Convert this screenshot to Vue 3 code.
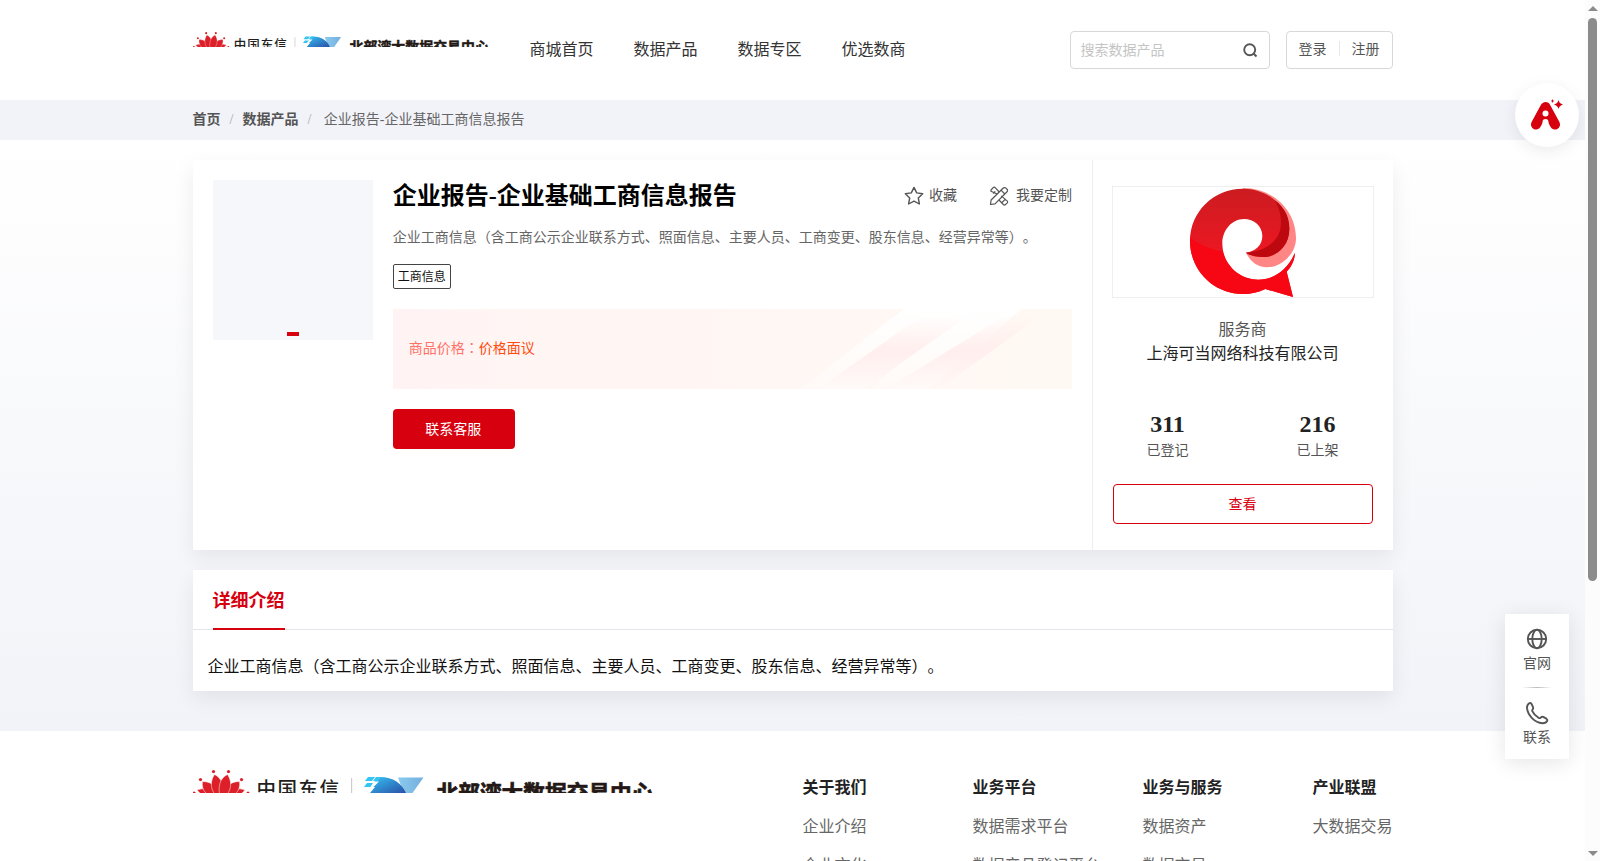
<template>
  <div class="page">
    <!-- 品牌标识，页头和页脚共用 -->
    <svg class="symbols" width="0" height="0">
      <defs>
        <linearGradient id="waveDeep" x1="0" y1="0" x2="1" y2="1">
          <stop offset="0" stop-color="#35c4f3" />
          <stop offset="1" stop-color="#2a4fa8" />
        </linearGradient>
        <linearGradient id="waveLight" x1="0" y1="0" x2="1" y2="0">
          <stop offset="0" stop-color="#8acbee" />
          <stop offset="1" stop-color="#74aede" />
        </linearGradient>
        <symbol id="brand" viewBox="0 0 462 23">
          <g fill="#d9202b">
            <circle cx="20.500" cy="1.600" r="1.600" />
            <circle cx="35.500" cy="1.600" r="1.600" />
            <circle cx="7.500" cy="9.600" r="1.600" />
            <circle cx="48.500" cy="9.600" r="1.600" />
            <circle cx="1.200" cy="23" r="1.500" />
            <circle cx="55" cy="23" r="1.500" />
          </g>
          <g fill="#dc1f29" stroke="#fff" stroke-width="0.500">
            <path d="M28 32C22 18 15 17 4 20c5 6 12 11 24 12z" />
            <path d="M28 32c6-14 13-15 24-12-5 6-12 11-24 12z" />
            <path d="M28 31C14 28 8 20 9.500 11.500c10 0 18 7 18.500 19.500z" />
            <path d="M28 31c14-3 20-11 18.500-19.500-10 0-18 7-18.500 19.500z" />
            <path d="M28 30C16 22 17 11 21.500 4.500c7 3 11 12 6.500 25.500z" />
            <path d="M28 30c12-8 11-19 6.500-25.500-7 3-11 12-6.500 25.500z" />
          </g>
          <text x="63.500" y="26" font-size="19.500" font-weight="500" letter-spacing="1.500" fill="#231f20">中国东信</text>
          <rect x="158" y="8" width="1.200" height="15" fill="#ccc" />
          <path d="M205 7.500h25.500l-11 15.500h-9z" fill="url(#waveLight)" />
          <path d="M184 7c15-1 25 6 29 16h-36l5-6h-3z" fill="url(#waveDeep)" />
          <path d="M175 7h7l-3 4h-7zM183 7h5l-3 4h-5zM174 13h8l-3 4h-8z" fill="#35c4f3" />
          <path d="M181 11.500h5l-6 6h-3z" fill="#fff" />
          <text x="243.500" y="31.300" font-size="21.700" font-weight="700" fill="#231815" stroke="#231815" stroke-width="0.700">北部湾大数据交易中心</text>
        </symbol>
      </defs>
    </svg>

    <header class="header">
      <div class="container header-inner">
        <svg class="header-logo"><use href="#brand" /></svg>
        <nav class="nav">
          <a v-for="item in navs" :key="item">{{ item }}</a>
        </nav>
        <div class="search">
          <span>搜索数据产品</span>
          <svg width="16" height="16" viewBox="0 0 16 16" fill="none" stroke="#555" stroke-width="1.900">
            <circle cx="7.700" cy="7.700" r="5.500" />
            <path d="M11.500 11.500l3 3" />
          </svg>
        </div>
        <div class="account">
          <a>登录</a>
          <i></i>
          <a>注册</a>
        </div>
      </div>
    </header>

    <div class="breadcrumb">
      <div class="container">
        <b>首页</b><span class="slash">/</span><b>数据产品</b><span class="slash">/</span><span class="current">企业报告-企业基础工商信息报告</span>
      </div>
    </div>

    <main class="main">
      <section class="container card product">
        <div class="cover"><span></span></div>

        <div class="info">
          <div class="title-row">
            <h1>企业报告-企业基础工商信息报告</h1>
            <div class="action favorite">
              <svg width="20" height="20" viewBox="0 0 20 20" fill="none" stroke="#555" stroke-width="1.400" stroke-linejoin="round">
                <path d="M10 1.400l2.700 5.500 6 .9-4.400 4.200 1.100 6-5.400-2.900L4.600 18l1.100-6L1.300 7.800l6-.9z" />
              </svg>
              <span>收藏</span>
            </div>
            <div class="action custom">
              <svg width="20" height="20" viewBox="0 0 20 20" fill="none" stroke="#555" stroke-width="1.200" stroke-linejoin="round">
                <path d="M1.500 18.500l.6-4.500L14 2.200c.9-.9 2.200-.8 3 0l.8.8c.9.900.9 2.100 0 3L6 17.800z" />
                <path d="M12 4.200L15.800 8M8.200 8L2 5.200a2 2 0 0 1 0-1.200l2-2.200c.8-.7 1.700-.7 2.400 0L10.200 6M4 7.500l2.200-2.200M12.200 9.900l5.900 5c.7.700.7 1.500 0 2.200L16.500 18.500c-.7.700-1.500.7-2.200 0L10 14M13 16.500l3.600-3.600" />
              </svg>
              <span>我要定制</span>
            </div>
          </div>
          <p class="desc">{{ intro }}</p>
          <span class="tag">工商信息</span>
          <div class="price">
            <svg class="price-bg" width="290" height="80" viewBox="0 0 290 80">
              <defs>
                <linearGradient id="streakWhite" x1="0" y1="0" x2="0" y2="1">
                  <stop offset="0" stop-color="#fff" />
                  <stop offset="1" stop-color="#fff" stop-opacity="0.300" />
                </linearGradient>
                <linearGradient id="streakPink" x1="0" y1="0" x2="0" y2="1">
                  <stop offset="0" stop-color="#ffeeed" stop-opacity="0" />
                  <stop offset="0.500" stop-color="#ffeeed" />
                  <stop offset="1" stop-color="#ffeeed" stop-opacity="0" />
                </linearGradient>
              </defs>
              <path d="M122 0h65L82 80H18z" fill="url(#streakWhite)" />
              <path d="M181 0h59L146 80H88z" fill="url(#streakWhite)" />
              <path d="M141 6h46L82 80H36z" fill="url(#streakPink)" />
              <path d="M226 5h36L156 80H104z" fill="url(#streakPink)" />
            </svg>
            <span class="price-label">商品价格<span class="colon">：</span></span><span class="price-value">价格面议</span>
          </div>
          <button class="btn-primary">联系客服</button>
        </div>

        <aside class="vendor">
          <div class="vendor-logo">
            <svg width="260" height="110" viewBox="99 81 780 330">
              <defs>
                <linearGradient id="vendorRed" x1="0" y1="0" x2="0" y2="1">
                  <stop offset="0" stop-color="#cb1c20" />
                  <stop offset="0.600" stop-color="#ed1722" />
                  <stop offset="1" stop-color="#fc0814" />
                </linearGradient>
              </defs>
              <path d="M489 84C580 84 649 153 648 236C647 284 602 322 562 322C530 322 510 302 498 278C545 276 603 249 603 190C603 150 560 110 489 90Z" fill="#ff8685" />
              <path d="M489 86C560 86 628 137 628 207C628 258 590 291 550 291C528 291 510 287 498 278C527 274 547 256 547 228C547 199 522 177 492 177C456 177 427 210 427 250C427 311 475 359 535 359C580 359 622 332 645 278C644 300 635 320 620 335L639 411L556 387C535 397 513 402 489 402C401 402 330 331 330 243C330 155 401 86 489 86Z" fill="url(#vendorRed)" />
              <path d="M330 232C358 255 392 269 428 274C441 323 483 359 535 359C580 359 622 332 645 278C644 300 635 320 620 335L639 411L556 387C535 397 513 402 489 402C401 402 330 331 330 243Z" fill="#f70713" />
              <path d="M583 121C619 145 628 177 628 207C628 258 590 291 550 291C528 291 510 287 498 278C545 276 603 249 603 190C603 164 597 141 583 121Z" fill="#bd080f" />
            </svg>
          </div>
          <div class="vendor-role">服务商</div>
          <div class="vendor-name">上海可当网络科技有限公司</div>
          <div class="stats">
            <div v-for="stat in stats" :key="stat.label" class="stat">
              <strong>{{ stat.value }}</strong>
              <span>{{ stat.label }}</span>
            </div>
          </div>
          <button class="btn-outline">查看</button>
        </aside>
      </section>

      <section class="container card detail">
        <div class="tabs"><span class="tab">详细介绍</span></div>
        <p>{{ intro }}</p>
      </section>
    </main>

    <footer class="footer">
      <div class="container footer-inner">
        <svg class="footer-logo"><use href="#brand" /></svg>
        <div class="footer-cols">
          <dl v-for="col in footerCols" :key="col.title">
            <dt>{{ col.title }}</dt>
            <dd v-for="link in col.links" :key="link">{{ link }}</dd>
          </dl>
        </div>
      </div>
    </footer>

    <!-- 悬浮入口 -->
    <div class="ai-entry">
      <svg width="34" height="32" viewBox="0 0 34 32">
        <path d="M6 25.500L15.500 8L25 25.500" fill="none" stroke="#d7000f" stroke-width="10" stroke-linecap="round" stroke-linejoin="round" />
        <path d="M15.500 8L22 22H9z" fill="#d7000f" />
        <circle cx="15.500" cy="14.500" r="3" fill="#fff" />
        <path d="M11 31l1.500-4v-4q0-3 3-3t3 3v4l1.500 4z" fill="#fff" />
        <path d="M28.500 1q.7 3.500 4.500 4.500-3.800 1-4.500 4.500-.7-3.500-4.500-4.500 3.800-1 4.500-4.500zM22.500 0l.6 1.400 1.400.6-1.400.6-.6 1.400-.6-1.400-1.400-.6 1.400-.6z" fill="#d7000f" />
      </svg>
    </div>

    <div class="float-bar">
      <div class="float-item">
        <svg width="24" height="24" viewBox="0 0 24 24" fill="none" stroke="#555" stroke-width="1.900">
          <circle cx="12" cy="12" r="9.200" />
          <ellipse cx="12" cy="12" rx="4.700" ry="9.200" />
          <path d="M3 12h18" />
        </svg>
        <span>官网</span>
      </div>
      <i></i>
      <div class="float-item">
        <svg width="24" height="24" viewBox="0 0 24 24" fill="none" stroke="#555" stroke-width="1.900" stroke-linejoin="round">
          <path d="M4.300 2.200Q1.700 3.800 2 7.200C2.800 14.200 9.400 21.500 17.400 22.200Q21 22.300 22.300 19.800Q22.700 18.500 21.400 17.700L18.200 15.900Q17 15.300 16 16.300L15.300 17Q14.400 17.400 13.500 16.800Q9 14 7.300 10.200Q6.900 9.200 7.600 8.500Q8.500 7.600 8.100 6.300L6.700 3.100Q5.900 1.500 4.300 2.200Z" />
        </svg>
        <span>联系</span>
      </div>
    </div>

    <div class="scrollbar">
      <span class="arrow up"></span>
      <span class="thumb"></span>
      <span class="arrow down"></span>
    </div>
  </div>
</template>

<script setup>
const navs = ['商城首页', '数据产品', '数据专区', '优选数商']

const intro = '企业工商信息（含工商公示企业联系方式、照面信息、主要人员、工商变更、股东信息、经营异常等）。'

const stats = [
  { value: 311, label: '已登记' },
  { value: 216, label: '已上架' }
]

const footerCols = [
  { title: '关于我们', links: ['企业介绍', '企业文化'] },
  { title: '业务平台', links: ['数据需求平台', '数据产品登记平台'] },
  { title: '业务与服务', links: ['数据资产', '数据交易'] },
  { title: '产业联盟', links: ['大数据交易'] }
]
</script>

<style>
body {
  margin: 0;
}
</style>

<style scoped>
.page {
  position: relative;
  width: 1600px;
  height: 861px;
  padding-right: 15px;
  box-sizing: border-box;
  overflow: hidden;
  background: #fff;
  font-family: "Liberation Serif", "Noto Sans CJK SC", serif;
  font-size: 14px;
  text-spacing-trim: space-all;
  color: #555;
}

.page * {
  box-sizing: border-box;
}

.symbols {
  position: absolute;
}

.container {
  width: 1200px;
  margin: 0 auto;
}

.header {
  height: 100px;
}

.header-inner {
  display: flex;
  align-items: flex-start;
  padding-top: 31px;
}

.header-logo {
  width: 297px;
  height: 15px;
  margin-top: 1px;
}

.nav {
  display: flex;
  gap: 40px;
  margin-left: 40px;
  font-size: 16px;
  line-height: 38px;
  color: #333;
}

.search {
  display: flex;
  justify-content: space-between;
  align-items: center;
  width: 200px;
  height: 38px;
  margin-left: auto;
  padding: 0 11px 0 10px;
  border: 1px solid #d8d8d8;
  border-radius: 4px;
  color: #c4c4c4;
}

.search span {
  padding-bottom: 2px;
}

.account {
  display: flex;
  align-items: center;
  justify-content: center;
  gap: 12px;
  width: 107px;
  height: 38px;
  margin-left: 16px;
  padding-bottom: 4px;
  border: 1px solid #d8d8d8;
  border-radius: 4px;
}

.account i {
  width: 1px;
  height: 15px;
  background: #e8e8e8;
}

.breadcrumb {
  height: 40px;
  line-height: 40px;
  background: #f2f3f8;
}

.slash {
  margin: 0 9px;
  color: #a5a8ae;
}

.current {
  margin-left: 3.5px;
  color: #666;
}

.main {
  height: 591px;
  padding-top: 20px;
  background: linear-gradient(180deg, #fff 0%, #f2f3f8 100%);
}

.card {
  background: #fff;
  box-shadow: 0 8px 20px rgba(0, 0, 0, 0.07);
}

.product {
  display: flex;
  height: 390px;
  padding-left: 0.5px;
}

.cover {
  display: flex;
  align-items: flex-end;
  justify-content: center;
  width: 160px;
  height: 160px;
  margin: 20px 20px 0;
  padding-bottom: 4px;
  background: #f5f7fb;
}

.cover span {
  width: 12px;
  height: 4px;
  background: #d7000f;
}

.info {
  width: 680px;
  padding-top: 20px;
}

.title-row {
  display: flex;
  align-items: center;
  height: 32px;
}

.title-row h1 {
  margin: 0;
  font-size: 24px;
  line-height: 32px;
  color: #000;
}

.action {
  display: flex;
  align-items: center;
  height: 30px;
}

.action span {
  padding-bottom: 4px;
}

.favorite {
  margin-left: auto;
  gap: 5px;
}

.custom {
  margin-left: 32px;
  gap: 7px;
}

.desc {
  margin: 15px 0 0;
  line-height: 22px;
  color: #666;
}

.tag {
  display: block;
  width: 58px;
  height: 25px;
  margin-top: 15px;
  padding-left: 4px;
  border: 1px solid #444;
  border-radius: 2px;
  font-size: 12px;
  line-height: 24px;
  color: #111;
}

.price {
  position: relative;
  display: flex;
  align-items: center;
  height: 80px;
  margin-top: 20px;
  padding: 0 0 4px 16px;
  background: linear-gradient(90deg, #fff4f3, #fff9f4);
}

.price-bg {
  position: absolute;
  top: 0;
  right: 0;
}

.price-label {
  color: #ff7268;
}

/* 冒号居中显示 */
.colon {
  font-family: "Noto Sans CJK TC", sans-serif;
  line-height: 1;
}

.price-value {
  color: #ff4a0c;
}

button {
  display: block;
  height: 40px;
  border-radius: 4px;
  font-family: inherit;
  font-size: 14px;
}

.btn-primary {
  width: 122px;
  margin-top: 20px;
  padding: 0 1px 2px 0;
  border: none;
  background: #d7000f;
  color: #fff;
}

.vendor {
  width: 301px;
  margin-left: 19.5px;
  padding: 26px 19px 0;
  border-left: 1px solid #eee;
  text-align: center;
}

.vendor-logo {
  width: 262px;
  height: 112px;
  border: 1px solid #eee;
}

.vendor-logo svg {
  display: block;
}

.vendor-role {
  margin-top: 20px;
  font-size: 16px;
  line-height: 24px;
}

.vendor-name {
  font-size: 16px;
  line-height: 24px;
  color: #222;
}

.stats {
  display: flex;
  margin: 44px -19px 0;
}

.stat {
  flex: 1;
}

.stat strong {
  display: block;
  font-size: 24px;
  line-height: 28px;
  color: #222;
}

.stat span {
  display: block;
  margin-top: 2px;
  line-height: 22px;
}

.btn-outline {
  width: 260px;
  margin: 22px 0 0 1px;
  padding: 0 0 2px;
  border: 1px solid #d7000f;
  background: #fff;
  color: #d7000f;
}

.detail {
  height: 121px;
  margin-top: 20px;
}

.tabs {
  height: 60px;
  padding-left: 20px;
  border-bottom: 1px solid #e4e4ea;
}

.tab {
  display: inline-block;
  height: 60px;
  border-bottom: 2px solid #d7000f;
  font-size: 18px;
  font-weight: bold;
  line-height: 62px;
  color: #d7000f;
}

.detail p {
  margin: 24px 0 0 15px;
  font-size: 16px;
  line-height: 26px;
  color: #111;
}

.footer {
  height: 130px;
  overflow: hidden;
}

.footer-inner {
  display: flex;
  justify-content: space-between;
  padding-top: 39px;
}

.footer-logo {
  width: 462px;
  height: 23px;
}

.footer-cols {
  display: grid;
  grid-template-columns: repeat(3, 170px) 80px;
  margin-top: 5px;
  font-size: 16px;
  line-height: 26px;
}

.footer-cols dl,
.footer-cols dd {
  margin: 0;
  white-space: nowrap;
}

.footer-cols dt {
  font-weight: bold;
  color: #222;
}

.footer-cols dd {
  margin-top: 13px;
  color: #666;
}

.ai-entry {
  position: absolute;
  top: 83px;
  left: 1515px;
  display: flex;
  align-items: center;
  justify-content: center;
  width: 64px;
  height: 64px;
  border-radius: 50%;
  background: #fff;
  box-shadow: 0 4px 16px rgba(0, 0, 0, 0.08);
}

.float-bar {
  position: absolute;
  top: 614px;
  left: 1505px;
  display: flex;
  flex-direction: column;
  align-items: center;
  width: 64px;
  height: 145px;
  padding-top: 13px;
  background: #fff;
  box-shadow: 0 4px 20px rgba(0, 0, 0, 0.1);
}

.float-item {
  display: flex;
  flex-direction: column;
  align-items: center;
  height: 50px;
  line-height: 26px;
}

.float-bar i {
  width: 30px;
  height: 1px;
  margin: 10px 0 13px;
  background: linear-gradient(90deg, #fff, #bbb, #fff);
}

.scrollbar {
  position: absolute;
  top: 0;
  right: 0;
  display: flex;
  flex-direction: column;
  align-items: center;
  width: 15px;
  height: 861px;
  background: #fcfcfc;
}

.arrow {
  border: 5px solid transparent;
}

.up {
  margin-top: 1px;
  border-bottom-color: #8b8b8b;
}

.down {
  margin-top: auto;
  border-top-color: #8b8b8b;
}

.thumb {
  width: 9px;
  height: 563px;
  margin-top: 7px;
  border-radius: 5px;
  background: #8b8b8b;
}
</style>
